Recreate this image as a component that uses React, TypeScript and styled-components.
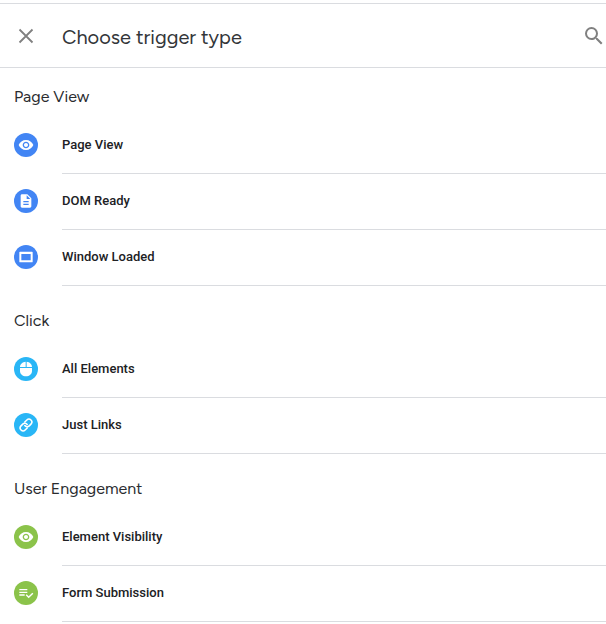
import React from 'react';
import styled, { createGlobalStyle } from 'styled-components';

const GlobalStyle = createGlobalStyle`
  *, *::before, *::after { box-sizing: border-box; }
  body {
    margin: 0;
    background: #fff;
    color: #202124;
    font-family: Roboto, "Liberation Sans", sans-serif;
  }
`;

const Panel = styled.main`
  margin-top: 3px;
  border-top: 1px solid #dadce0;
  overflow: hidden;
`;

const Header = styled.header`
  display: flex;
  align-items: center;
  height: 64px;
  padding: 0 0 0 14px;
  border-bottom: 1px solid #dadce0;
`;

const Title = styled.h1`
  flex: 1;
  margin: 2px 0 0 24px;
  color: #333639;
  font: 400 20px/24px "Google Sans", Figtree, Lato, sans-serif;
`;

const IconButton = styled.button`
  display: flex;
  flex: none;
  padding: 0;
  border: 0;
  background: none;
  color: #808080;
  cursor: pointer;
`;

const Sections = styled.div`
  display: flex;
  flex-direction: column;
  gap: 6px;
`;

const Section = styled.section`
  padding-left: 14px;
`;

const SectionTitle = styled.h2`
  margin: 0;
  padding: 17px 0 9px;
  color: #2a2c2f;
  font: 400 16px/24px "Google Sans", Figtree, Lato, sans-serif;
`;

const List = styled.ul`
  margin: 0;
  padding: 0;
  list-style: none;
`;

const Row = styled.button`
  display: flex;
  align-items: flex-start;
  gap: 24px;
  width: 100%;
  padding: 0;
  border: 0;
  background: none;
  color: inherit;
  text-align: left;
  cursor: pointer;
`;

const Badge = styled.span<{ $color: string }>`
  display: flex;
  flex: none;
  align-items: center;
  justify-content: center;
  width: 24px;
  height: 24px;
  margin-top: 15px;
  border-radius: 50%;
  background: ${({ $color }) => $color};
  color: #fff;
`;

const Label = styled.span`
  flex: 1;
  padding: 15px 0 16px;
  border-bottom: 1px solid #dadce0;
  font: 500 13px/24px Roboto, "Liberation Sans", sans-serif;
`;

type IconName = 'eye' | 'page' | 'window' | 'mouse' | 'link' | 'form';

const paths: Record<Exclude<IconName, 'link'>, string> = {
  eye: 'M12 4.5C7 4.5 2.73 7.61 1 12c1.73 4.39 6 7.5 11 7.5s9.27-3.11 11-7.5c-1.73-4.39-6-7.5-11-7.5zM12 17c-2.76 0-5-2.24-5-5s2.24-5 5-5 5 2.24 5 5-2.24 5-5 5zm0-8c-1.66 0-3 1.34-3 3s1.34 3 3 3 3-1.34 3-3-1.34-3-3-3z',
  page: 'M14 2H6c-1.1 0-2 .9-2 2v16c0 1.1.9 2 2 2h12c1.1 0 2-.9 2-2V8l-6-6zm2 16H8v-2h8v2zm0-4H8v-2h8v2zm-3-5V3.5L18.5 9H13z',
  window: 'M3 4h18c.6 0 1 .4 1 1v14c0 .6-.4 1-1 1H3c-.6 0-1-.4-1-1V5c0-.6.4-1 1-1zM5 7.500v9.500h14V7.500z',
  mouse: 'M13 1v8h8c0-4.400-3.500-7.700-8-8zM3 15c0 4.600 4 8 9 8s9-3.400 9-8v-4.500H3V15zM11.500 1C6.700 1.300 3 4.600 3 9h8.500V1z',
  form: 'M14 10H2v2h12v-2zm0-4H2v2h12V6zM2 16h8v-2H2v2zm19.5-4.5L23 13l-6.99 7-4.51-4.5L13 14l3.01 3 5.49-5.5z',
};

function Glyph({ name }: { name: IconName }) {
  if (name === 'link') {
    return (
      <svg width="14" height="14" viewBox="0 0 24 24" fill="none" stroke="currentColor" strokeWidth="2.700" strokeLinecap="round" aria-hidden="true">
        <path d="M10 13a5 5 0 0 0 7.540.540l3-3a5 5 0 0 0-7.070-7.070l-3.500 3.500" />
        <path d="M14 11a5 5 0 0 0-7.540-.540l-3 3a5 5 0 0 0 7.070 7.070l3.500-3.500" />
      </svg>
    );
  }
  return (
    <svg width="16" height="16" viewBox="0 0 24 24" fill="currentColor" fillRule="evenodd" aria-hidden="true">
      <path d={paths[name]} />
    </svg>
  );
}

const BLUE = '#4285f4';
const CYAN = '#29b6f6';
const GREEN = '#8bc34a';

const groups: { title: string; color: string; items: { label: string; icon: IconName }[] }[] = [
  {
    title: 'Page View',
    color: BLUE,
    items: [
      { label: 'Page View', icon: 'eye' },
      { label: 'DOM Ready', icon: 'page' },
      { label: 'Window Loaded', icon: 'window' },
    ],
  },
  {
    title: 'Click',
    color: CYAN,
    items: [
      { label: 'All Elements', icon: 'mouse' },
      { label: 'Just Links', icon: 'link' },
    ],
  },
  {
    title: 'User Engagement',
    color: GREEN,
    items: [
      { label: 'Element Visibility', icon: 'eye' },
      { label: 'Form Submission', icon: 'form' },
    ],
  },
];

export default function App() {
  return (
    <>
      <GlobalStyle />
      <Panel>
        <Header>
          <IconButton type="button" aria-label="Close">
            <svg width="24" height="24" viewBox="0 0 24 24" fill="none" stroke="currentColor" strokeWidth="1.800" aria-hidden="true">
              <path d="M5.500 5.500l13 13M18.500 5.500l-13 13" />
            </svg>
          </IconButton>
          <Title>Choose trigger type</Title>
          <IconButton type="button" aria-label="Search">
            <svg width="24" height="24" viewBox="0 0 24 24" fill="currentColor" aria-hidden="true">
              <path d="M15.5 14h-.79l-.28-.27A6.471 6.471 0 0 0 16 9.5 6.5 6.5 0 1 0 9.5 16c1.61 0 3.09-.59 4.23-1.57l.27.28v.79l5 4.99L20.49 19l-4.99-5zm-6 0C7.01 14 5 11.99 5 9.5S7.01 5 9.5 5 14 7.01 14 9.5 11.99 14 9.5 14z" />
            </svg>
          </IconButton>
        </Header>
        <Sections>
          {groups.map((group) => (
            <Section key={group.title} aria-label={group.title}>
              <SectionTitle>{group.title}</SectionTitle>
              <List>
                {group.items.map((item) => (
                  <li key={item.label}>
                    <Row type="button">
                      <Badge $color={group.color}>
                        <Glyph name={item.icon} />
                      </Badge>
                      <Label>{item.label}</Label>
                    </Row>
                  </li>
                ))}
              </List>
            </Section>
          ))}
        </Sections>
      </Panel>
    </>
  );
}
